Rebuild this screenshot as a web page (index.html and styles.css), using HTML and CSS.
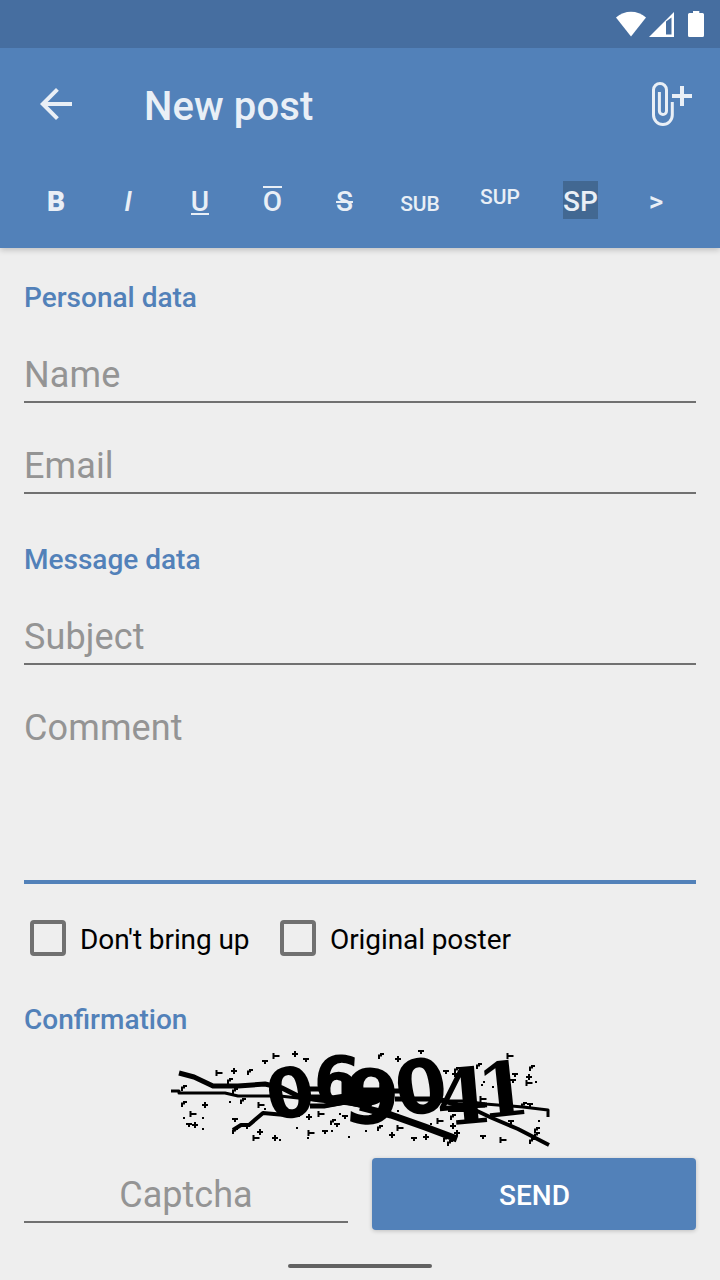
FILE: index.html
```
<!DOCTYPE html>
<html lang="en">
<head>
<meta charset="utf-8">
<title>New post</title>
<link rel="stylesheet" href="styles.css">
</head>
<body>
<div class="screen">
  <header class="header">
    <div class="status">
      <svg width="90" height="28" viewBox="615 10 90 28" fill="#fff">
        <path d="M616 17.500C624.500 9.800 637.500 9.800 646 17.500L631 36.500Z"/>
        <path fill-rule="evenodd" d="M649 37L674 12V37ZM666 21.500V34.500H671.500V17.500Z"/>
        <path d="M693 11h6.300v2h3.200q1.500 0 1.500 1.500v21q0 1.500-1.500 1.500h-13q-1.500 0-1.500-1.500v-21q0-1.500 1.500-1.500h3.500z"/>
      </svg>
    </div>
    <div class="toolbar">
      <svg class="back" width="48" height="48" viewBox="0 0 24 24"><path d="M20 11H7.830l5.590-5.590L12 4l-8 8 8 8 1.410-1.410L7.830 13H20v-2z"/></svg>
      <h1 class="title">New post</h1>
      <svg class="attach" width="44" height="48" viewBox="650 80 44 48" fill="none">
        <path stroke-width="3" d="M672.300 102V115.100a9.400 9.400 0 0 1-18.800 0V90a6.500 6.500 0 0 1 13 0V111a3.550 3.550 0 0 1-7.100 0V92"/>
        <path stroke-width="4" d="M672 96h20M682 86v20"/>
      </svg>
    </div>
    <nav class="formats">
      <span class="fmt bold">B</span>
      <span class="fmt italic">I</span>
      <span class="fmt"><span class="under">U</span></span>
      <span class="fmt"><span class="over">O</span></span>
      <span class="fmt"><span class="strike">S</span></span>
      <span class="fmt wide sub">SUB</span>
      <span class="fmt wide sup">SUP</span>
      <span class="fmt wide"><span class="spoiler">SP</span></span>
      <span class="fmt code">&gt;</span>
    </nav>
  </header>
  <main class="form">
    <h2 class="section">Personal data</h2>
    <div class="field first">Name</div>
    <div class="field">Email</div>
    <h2 class="section next">Message data</h2>
    <div class="field first">Subject</div>
    <div class="field comment">Comment</div>
    <div class="checks">
      <label class="check"><span class="box"></span><span class="label">Don't bring up</span></label>
      <label class="check"><span class="box"></span><span class="label">Original poster</span></label>
    </div>
    <h2 class="section confirm">Confirmation</h2>
    <svg class="captcha" width="380" height="100" viewBox="170 1048 380 100">
      <defs>
        <path id="p" d="M-3 0h6M0-3v6"/>
        <path id="t" d="M-2.500-3v6M-2.500 0h6"/>
        <path id="v" d="M-3-1h6M0-1v3"/>
        <path id="c" d="M-2 3v-3.500h2v-1.500h3"/>
        <path id="d" d="M-1 0h2"/>
      </defs>
      <g class="digits" text-anchor="middle">
        <text transform="translate(294 1117) rotate(-9)" font-size="69">0</text>
        <text transform="translate(335 1104) rotate(4)" font-size="67">6</text>
        <text transform="translate(370 1124) rotate(4) scale(1.060 1)" font-size="76">9</text>
        <text transform="translate(425 1113) rotate(-9)" font-size="75">0</text>
        <text class="serif" transform="translate(465 1124) rotate(-5)" font-size="77">4</text>
        <text class="serif" transform="translate(506 1116) rotate(-6)" font-size="75">1</text>
      </g>
      <g class="lines">
        <path stroke-width="5" d="M179 1073L194 1077L213 1086H238L265 1084L282 1088L300 1097L320 1100L350 1103L370 1107"/>
        <path stroke-width="3" d="M171 1091H179V1093H225L238 1096H280L316 1100H350"/>
        <path stroke-width="4" d="M233 1130L241 1125H249L263 1113L285 1115H300"/>
        <path stroke-width="5" d="M308 1089H320M308 1097H330M310 1106H324L345 1102L370 1107"/>
        <path stroke-width="7" d="M360 1107L391 1115L425 1127L457 1139"/>
        <path stroke-width="5" d="M390 1091H408M395 1099H438L458 1105H485"/>
        <path stroke-width="3" d="M438 1101H465L485 1104L523 1107L548 1110V1117"/>
        <path stroke-width="4" d="M448 1110H475L492 1118L518 1129L549 1145"/>
        <path stroke-width="11" d="M347 1077V1101M326 1102L352 1098L372 1105M352 1093H382"/>
      </g>
      <g class="specks">
        <use href="#t" x="219" y="1073"/><use href="#p" x="234" y="1071"/><use href="#c" x="250" y="1072"/><use href="#v" x="265" y="1062"/><use href="#t" x="276" y="1056"/><use href="#p" x="295" y="1054"/><use href="#v" x="306" y="1060"/>
        <use href="#c" x="230" y="1081"/><use href="#c" x="184" y="1088"/><use href="#c" x="184" y="1104"/><use href="#p" x="205" y="1105"/><use href="#t" x="193" y="1114"/><use href="#d" x="184" y="1118"/><use href="#v" x="189" y="1125"/><use href="#p" x="195" y="1125"/><use href="#d" x="203" y="1118"/><use href="#d" x="203" y="1129"/>
        <use href="#c" x="235" y="1091"/><use href="#c" x="243" y="1101"/><use href="#d" x="230" y="1102"/><use href="#t" x="261" y="1105"/><use href="#d" x="265" y="1109"/><use href="#v" x="235" y="1120"/><use href="#c" x="235" y="1131"/><use href="#v" x="247" y="1127"/><use href="#p" x="260" y="1132"/><use href="#t" x="256" y="1138"/><use href="#p" x="275" y="1138"/><use href="#d" x="280" y="1140"/>
        <use href="#p" x="309" y="1117"/><use href="#t" x="321" y="1114"/><use href="#c" x="333" y="1122"/><use href="#v" x="337" y="1125"/><use href="#d" x="340" y="1114"/><use href="#v" x="345" y="1117"/><use href="#v" x="361" y="1118"/><use href="#d" x="297" y="1128"/><use href="#t" x="311" y="1133"/><use href="#d" x="308" y="1138"/><use href="#v" x="325" y="1132"/><use href="#d" x="332" y="1131"/><use href="#d" x="349" y="1137"/><use href="#d" x="366" y="1131"/>
        <use href="#c" x="381" y="1056"/><use href="#p" x="398" y="1059"/><use href="#v" x="421" y="1052"/><use href="#v" x="446" y="1072"/><use href="#c" x="457" y="1070"/><use href="#v" x="455" y="1075"/><use href="#c" x="479" y="1066"/><use href="#t" x="510" y="1056"/><use href="#c" x="532" y="1068"/><use href="#v" x="515" y="1075"/><use href="#v" x="513" y="1081"/><use href="#p" x="529" y="1077"/><use href="#t" x="529" y="1083"/><use href="#d" x="536" y="1082"/><use href="#d" x="484" y="1082"/><use href="#d" x="493" y="1087"/><use href="#d" x="482" y="1085"/><use href="#t" x="483" y="1099"/>
        <use href="#c" x="380" y="1128"/><use href="#p" x="392" y="1135"/><use href="#t" x="400" y="1128"/><use href="#v" x="414" y="1139"/><use href="#p" x="426" y="1137"/><use href="#t" x="440" y="1121"/><use href="#c" x="453" y="1117"/><use href="#p" x="453" y="1126"/><use href="#p" x="457" y="1133"/><use href="#c" x="446" y="1139"/><use href="#c" x="450" y="1143"/><use href="#v" x="483" y="1137"/><use href="#t" x="503" y="1140"/><use href="#v" x="511" y="1122"/><use href="#d" x="539" y="1121"/><use href="#c" x="537" y="1130"/><use href="#c" x="537" y="1135"/><use href="#c" x="532" y="1141"/><use href="#d" x="398" y="1111"/><use href="#d" x="431" y="1124"/><use href="#c" x="524" y="1105"/><use href="#v" x="530" y="1105"/>
      </g>
    </svg>
    <div class="submit">
      <div class="field answer">Captcha</div>
      <button class="send">SEND</button>
    </div>
  </main>
  <div class="handle"></div>
</div>
</body>
</html>
```
FILE: styles.css
```
* { box-sizing: border-box; }
body { margin: 0; font-family: Roboto, "Liberation Sans", sans-serif; background: #eee; }
.screen { width: 720px; height: 1280px; overflow: hidden; display: flex; flex-direction: column; background: #eee; }
.header { height: 248px; flex: none; background: #5281b9; color: #e9eff6; box-shadow: 0 2px 6px rgba(0,0,0,.2); }
.status { height: 48px; background: #466ea0; display: flex; justify-content: flex-end; padding: 10px 15px 0 0; }
.toolbar { height: 112px; display: flex; align-items: center; padding: 0 26px 0 32px; }
.back { fill: #e9eff6; }
.title { margin: 6px 0 0 64px; flex: 1; font-size: 40px; line-height: 48px; font-weight: 500; letter-spacing: .1px; }
.attach { stroke: #e9eff6; }
.formats { height: 80px; display: flex; align-items: center; padding-left: 20px; font-size: 28px; line-height: 42px; font-weight: 500; }
.fmt { width: 72px; height: 38px; text-align: center; }
.wide { width: 80px; }
.bold { font-weight: 900; }
.italic { font-style: italic; }
.under, .over { display: inline-block; }
.under { border-bottom: 2px solid; line-height: 22px; }
.over { border-top: 2px solid; line-height: 28px; margin: -2px 0 0 1px; }
.strike { margin-left: 1px; text-decoration: line-through; text-decoration-thickness: 2px; }
.sub { font-size: 21px; padding-top: 2px; }
.sup { font-size: 21px; margin-top: -10px; }
.spoiler { display: inline-block; width: 35px; height: 38px; margin-left: 1px; background: #426892; }
.form { padding: 0 24px; }
.section { margin: 31px 0 0; padding-top: 1px; height: 36px; font-size: 28px; line-height: 36px; font-weight: 500; color: #5281b9; }
.field { height: 91px; padding-top: 45px; font-size: 36px; line-height: 36px; letter-spacing: .12px; color: #949494; border-bottom: 2px solid #707070; }
.field.first { height: 88px; padding-top: 42px; }
.section.next { margin-top: 47px; }
.comment { height: 219px; border-bottom: 4px solid #5281b9; }
.checks { display: flex; padding: 36px 0 0 6px; }
.check { display: flex; align-items: center; gap: 14px; width: 250px; height: 36px; font-size: 28px; letter-spacing: -.09px; color: #000; }
.label { padding-top: 2px; }
.box { width: 36px; height: 36px; border: 4px solid #707070; border-radius: 4px; }
.section.confirm { margin-top: 45px; }
.captcha { display: block; margin: 11px 0 0 146px; overflow: visible; }
.digits { font-family: "DejaVu Sans", sans-serif; font-weight: bold; fill: #000; }
.serif { font-family: "DejaVu Serif", serif; }
.lines { fill: none; stroke: #000; stroke-linejoin: round; }
.specks { fill: none; stroke: #000; stroke-width: 2; }
.submit { display: flex; gap: 24px; padding-top: 10px; }
.answer { width: 324px; height: 65px; padding-top: 19px; text-align: center; letter-spacing: 0; }
.send { width: 324px; height: 72px; border: 0; border-radius: 4px; background: #5281b9; color: #fff; font: 500 28px Roboto, sans-serif; padding: 2px 0 0 1px; box-shadow: 0 1px 4px rgba(0,0,0,.2); }
.handle { width: 144px; height: 4px; border-radius: 2px; background: #616161; margin: 34px auto 0; }
```
